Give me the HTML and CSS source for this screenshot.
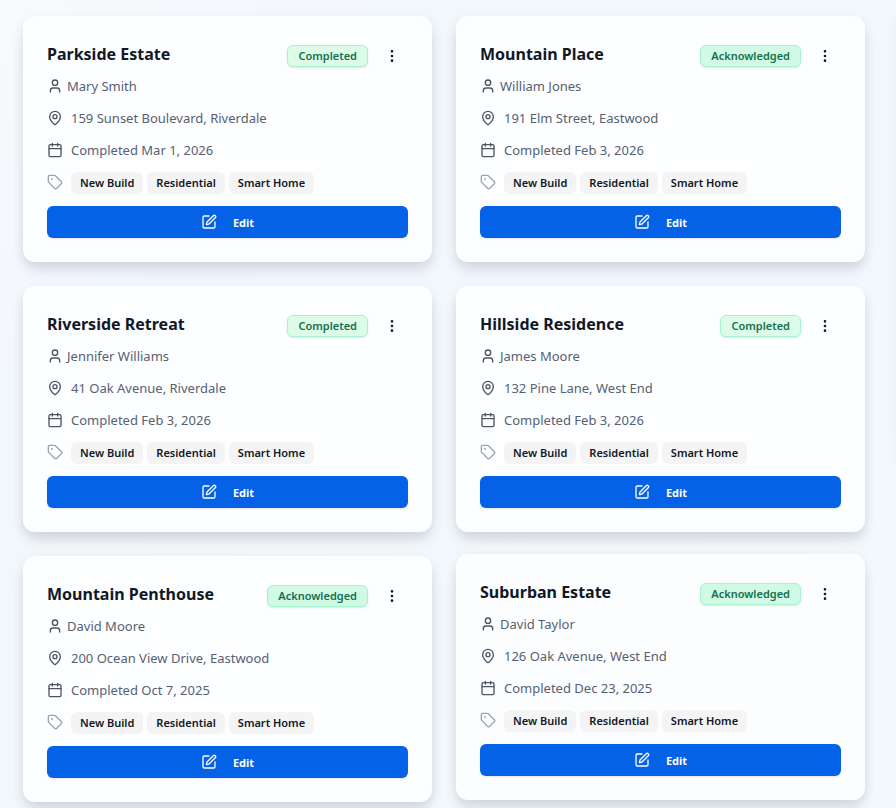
FILE: index.html
```html
<!DOCTYPE html>
<html lang="en">
<head>
    <meta charset="UTF-8">
    <meta name="viewport" content="width=device-width, initial-scale=1.0">
    <title>Projects</title>
    <link rel="stylesheet" href="styles.css">
</head>
<body>
    <!-- Shared icons -->
    <svg class="sprite" aria-hidden="true">
        <symbol id="user" viewBox="0 0 24 24"><path d="M19 21v-2a4 4 0 0 0-4-4H9a4 4 0 0 0-4 4v2"/><circle cx="12" cy="7" r="4"/></symbol>
        <symbol id="pin" viewBox="0 0 24 24"><path d="M20 10c0 4.993-5.539 10.193-7.399 11.799a1 1 0 0 1-1.202 0C9.539 20.193 4 14.993 4 10a8 8 0 0 1 16 0"/><circle cx="12" cy="10" r="3"/></symbol>
        <symbol id="calendar" viewBox="0 0 24 24"><path d="M8 2v4M16 2v4"/><rect width="18" height="18" x="3" y="4" rx="2"/><path d="M3 10h18"/></symbol>
        <symbol id="tag" viewBox="0 0 24 24"><path d="M12.586 2.586A2 2 0 0 0 11.172 2H4a2 2 0 0 0-2 2v7.172a2 2 0 0 0 .586 1.414l8.704 8.704a2.426 2.426 0 0 0 3.42 0l6.58-6.58a2.426 2.426 0 0 0 0-3.42z"/><circle cx="7.5" cy="7.5" r=".5" fill="currentColor"/></symbol>
        <symbol id="edit" viewBox="0 0 24 24"><path d="M12 3H5a2 2 0 0 0-2 2v14a2 2 0 0 0 2 2h14a2 2 0 0 0 2-2v-7"/><path d="M18.375 2.625a1 1 0 0 1 3 3l-9.013 9.014a2 2 0 0 1-.853.505l-2.873.84a.5.5 0 0 1-.62-.62l.84-2.873a2 2 0 0 1 .506-.852z"/></symbol>
        <symbol id="dots" viewBox="0 0 24 24"><circle cx="12" cy="12" r="1"/><circle cx="12" cy="5" r="1"/><circle cx="12" cy="19" r="1"/></symbol>
    </svg>

    <div class="layout">
        <main class="projects" id="projects">
            <!-- Project cards will be appended here -->
        </main>
        <aside class="sidePanel"></aside>
    </div>

    <script>
        const projects = [
            { name: 'Parkside Estate', client: 'Mary Smith', address: '159 Sunset Boulevard, Riverdale', date: 'Mar 1, 2026', status: 'Completed' },
            { name: 'Mountain Place', client: 'William Jones', address: '191 Elm Street, Eastwood', date: 'Feb 3, 2026', status: 'Acknowledged' },
            { name: 'Riverside Retreat', client: 'Jennifer Williams', address: '41 Oak Avenue, Riverdale', date: 'Feb 3, 2026', status: 'Completed' },
            { name: 'Hillside Residence', client: 'James Moore', address: '132 Pine Lane, West End', date: 'Feb 3, 2026', status: 'Completed' },
            { name: 'Mountain Penthouse', client: 'David Moore', address: '200 Ocean View Drive, Eastwood', date: 'Oct 7, 2025', status: 'Acknowledged' },
            { name: 'Suburban Estate', client: 'David Taylor', address: '126 Oak Avenue, West End', date: 'Dec 23, 2025', status: 'Acknowledged', active: true }
        ];
        const tags = ['New Build', 'Residential', 'Smart Home'];

        function icon(id) {
            return `<svg class="icon" aria-hidden="true"><use href="#${id}"/></svg>`;
        }

        // Build one card per project
        document.getElementById('projects').innerHTML = projects.map(p => `
            <article class="card ${p.active ? 'active' : ''}">
                <header class="cardHeader">
                    <h2 class="cardTitle">${p.name}</h2>
                    <span class="badge ${p.status.toLowerCase()}">${p.status}</span>
                    <button type="button" class="menuButton" aria-label="Project menu">${icon('dots')}</button>
                </header>
                <p class="row client">${icon('user')}${p.client}</p>
                <p class="row">${icon('pin')}${p.address}</p>
                <p class="row">${icon('calendar')}Completed ${p.date}</p>
                <div class="tags">
                    ${icon('tag')}
                    <ul class="tagList">${tags.map(t => `<li class="tag">${t}</li>`).join('')}</ul>
                </div>
                <button type="button" class="editButton">${icon('edit')}Edit</button>
            </article>`).join('');
    </script>
</body>
</html>
```

FILE: styles.css
```css
* {
    box-sizing: border-box;
}

body {
    margin: 0;
    font-family: "Noto Sans", "Open Sans", sans-serif;
    font-size: 13px;
    line-height: 20px;
    color: #566171;
    background: linear-gradient(135deg, #f8fafc, #f2f7fc 25%, #f3f8fc);
    min-height: 100vh;
    overflow: hidden;
}

.sprite {
    display: none;
}

.layout {
    display: flex;
    align-items: flex-start;
}

.projects {
    flex: 1;
    display: grid;
    grid-template-columns: 1fr 1fr;
    gap: 24px;
    padding: 16px 31px 24px 23px;
}

/* the next panel starts at the window edge, only its shadow shows */
.sidePanel {
    width: 0;
    height: 440px;
    margin-top: 16px;
    box-shadow: 0 4px 10px 1px rgba(15, 23, 42, 0.1);
}

.card {
    display: flex;
    flex-direction: column;
    gap: 12px;
    min-width: 0;
    padding: 24px;
    border-radius: 12px;
    background: #fdfeff;
    box-shadow: 0 10px 15px -3px rgba(15, 23, 42, 0.1), 0 4px 12px rgba(15, 23, 42, 0.08);
}

.card.active {
    background: #fcfdff;
    transform: translateY(-2px);
}

.cardHeader {
    display: flex;
    align-items: center;
    height: 32px;
}

.cardTitle {
    flex: 1;
    align-self: flex-start;
    margin: 0;
    font-size: 16px;
    line-height: 28px;
    font-weight: 700;
    color: #111827;
}

.badge {
    padding: 0 10px;
    border: 1px solid #a7f3d0;
    border-radius: 6px;
    font-size: 11px;
    font-weight: 600;
    color: #166f4f;
    background: #dcfce7;
    box-shadow: 0 1px 2px rgba(0, 0, 0, 0.1);
}

.badge.acknowledged {
    background: #d1fae5;
}

.icon {
    flex: none;
    width: 16px;
    height: 16px;
    fill: none;
    stroke: currentColor;
    stroke-width: 2;
    stroke-linecap: round;
    stroke-linejoin: round;
}

.menuButton {
    display: flex;
    align-items: center;
    justify-content: center;
    width: 32px;
    height: 32px;
    margin-left: 8px;
    padding: 0;
    border: none;
    border-radius: 6px;
    color: #111827;
    background: none;
    cursor: pointer;
}

.row {
    display: flex;
    align-items: center;
    gap: 8px;
    margin: 0;
}

.row .icon {
    color: #4b5563;
}

.client {
    gap: 4px;
    margin-top: -8px;
}

.tags {
    display: flex;
    align-items: flex-start;
    gap: 8px;
}

.tags .icon {
    margin-top: 2px;
    color: #9ca3af;
}

.tagList {
    display: flex;
    flex-wrap: wrap;
    gap: 4px;
    margin: 0;
    padding: 0;
    list-style: none;
}

.tag {
    padding: 1px 9px;
    border-radius: 6px;
    font-size: 11px;
    font-weight: 600;
    color: #111827;
    background: #f4f4f5;
}

.editButton {
    display: flex;
    align-items: center;
    justify-content: center;
    gap: 16px;
    height: 32px;
    padding: 0 12px;
    border: none;
    border-radius: 6px;
    font-family: inherit;
    font-size: 11px;
    font-weight: 700;
    color: #fff;
    background: #0561e6;
    box-shadow: 0 1px 2px rgba(0, 0, 0, 0.1);
    cursor: pointer;
}
```
